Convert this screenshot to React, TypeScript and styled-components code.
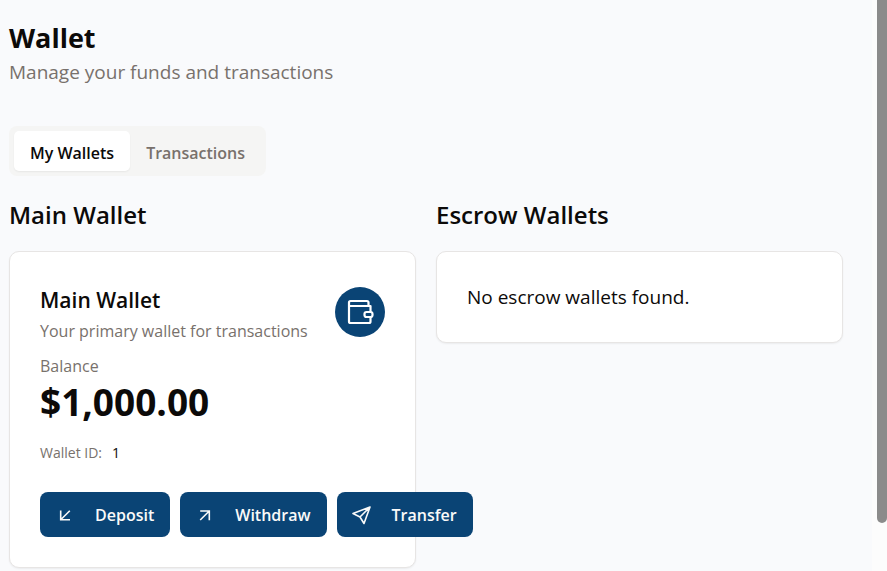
import React, { useState } from "react";
import styled, { createGlobalStyle } from "styled-components";

const GlobalStyle = createGlobalStyle`
  *, *::before, *::after { box-sizing: border-box; }
  body {
    margin: 0;
    background: #f9fafc;
    color: #0c0a09;
    font-family: "Segoe UI", "Open Sans", "Noto Sans", sans-serif;
    overflow: hidden;
  }
  h1, h2, h3, p, dl, dd { margin: 0; }
  button { font: inherit; border: 0; cursor: pointer; }
`;

const Shell = styled.div`
  display: flex;
  align-items: flex-start;
  height: 100vh;
  overflow: hidden;
`;

const Page = styled.main`
  flex: 1;
  min-width: 0;
  padding: 20px 29px 3px 9px;
`;

const ScrollTrack = styled.div`
  width: 15px;
  height: 100%;
  padding-left: 5px;
  background: #fcfcfc;
`;

const ScrollThumb = styled.div`
  height: 523px;
  border-radius: 0 0 5px 5px;
  background: #8b8b8b;
`;

const Title = styled.h1`
  font-size: 27px;
  line-height: 36px;
  font-weight: 700;
`;

const Subtitle = styled.p`
  font-size: 19px;
  line-height: 32px;
  color: #78716c;
`;

const TabList = styled.div`
  display: inline-flex;
  margin: 38px 0 20px;
  padding: 5px;
  border-radius: 8px;
  background: #f5f5f4;
`;

const Tab = styled.button<{ $active: boolean }>`
  padding: 4px 16px 0;
  border-radius: 5px;
  font-size: 16px;
  line-height: 36px;
  font-weight: 600;
  color: ${(p) => (p.$active ? "#0c0a09" : "#78716c")};
  background: ${(p) => (p.$active ? "#ffffff" : "transparent")};
  box-shadow: ${(p) => (p.$active ? "0 1px 2px rgba(0, 0, 0, 0.06)" : "none")};
`;

const Columns = styled.div`
  display: grid;
  grid-template-columns: repeat(2, minmax(0, 1fr));
  align-items: start;
  gap: 20px;
`;

const SectionTitle = styled.h2`
  margin-bottom: 17px;
  font-size: 24px;
  line-height: 38px;
  font-weight: 600;
`;

const Card = styled.div`
  padding: 30px;
  border: 1px solid #e7e5e4;
  border-radius: 10px;
  background: #ffffff;
  box-shadow: 0 1px 2px rgba(0, 0, 0, 0.06);
`;

const CardHeader = styled.div`
  display: flex;
  justify-content: space-between;
  align-items: flex-start;
  padding: 2px 0 5px;
`;

const CardTitle = styled.h3`
  font-size: 21px;
  line-height: 32px;
  font-weight: 600;
`;

const Muted = styled.p`
  font-size: 16px;
  line-height: 30px;
  color: #78716c;
`;

const IconBadge = styled.span`
  display: grid;
  flex: none;
  place-items: center;
  width: 50px;
  height: 50px;
  margin-top: 3px;
  border-radius: 50%;
  background: #0a4475;
  color: #ffffff;
`;

const Balance = styled.p`
  font-size: 37px;
  line-height: 42px;
  font-weight: 700;
`;

const WalletId = styled.dl`
  display: flex;
  gap: 10px;
  margin: 15px 0 24px;
  font-size: 14px;
  line-height: 30px;
  dt { color: #78716c; }
`;

const Actions = styled.div`
  display: flex;
  gap: 10px;
`;

const ActionButton = styled.button`
  display: inline-flex;
  flex: none;
  align-items: center;
  gap: 20px;
  height: 45px;
  padding: 0 16px 0 15px;
  border-radius: 8px;
  background: #0a4475;
  color: #fafaf9;
  font-size: 16px;
  font-weight: 600;
`;

const EmptyText = styled.p`
  font-size: 19px;
  line-height: 30px;
`;

const Icon = ({ size, children }: { size: number; children: React.ReactNode }) => (
  <svg
    width={size}
    height={size}
    viewBox={`0 0 ${size} ${size}`}
    fill="none"
    stroke="currentColor"
    strokeLinejoin="round"
    aria-hidden="true"
  >
    {children}
  </svg>
);

const WalletIcon = () => (
  <Icon size={30}>
    <g strokeWidth="2.2">
      <path d="M4 9V5.5Q4 4 5.5 4H22Q23.5 4 23.5 5.5V9" />
      <path d="M25.5 15V9H4V24.5Q4 26 5.5 26H24Q25.5 26 25.5 24.5V20" />
      <rect x="19.5" y="15" width="8" height="5" rx="2" />
    </g>
  </Icon>
);

const DepositIcon = () => (
  <Icon size={20}>
    <path d="M14.8 5.8L5.7 14.8M5.7 5.5V14.8H15" strokeWidth="1.6" strokeLinejoin="miter" />
  </Icon>
);

const WithdrawIcon = () => (
  <Icon size={20}>
    <path d="M5.2 15L14.3 6M5.2 6H14.3V15.3" strokeWidth="1.6" strokeLinejoin="miter" />
  </Icon>
);

const SendIcon = () => (
  <Icon size={20}>
    <path d="M18 2L1 8.5L8 12L12 18.5ZM18 2L8 12" strokeWidth="1.6" />
  </Icon>
);

const tabs = ["My Wallets", "Transactions"];

const actions = [
  { label: "Deposit", icon: <DepositIcon /> },
  { label: "Withdraw", icon: <WithdrawIcon /> },
  { label: "Transfer", icon: <SendIcon /> },
];

export default function App() {
  const [active, setActive] = useState(tabs[0]);

  return (
    <>
      <GlobalStyle />
      <Shell>
        <Page>
          <Title>Wallet</Title>
          <Subtitle>Manage your funds and transactions</Subtitle>
          <TabList role="tablist">
            {tabs.map((tab) => (
              <Tab
                key={tab}
                type="button"
                role="tab"
                aria-selected={tab === active}
                $active={tab === active}
                onClick={() => setActive(tab)}
              >
                {tab}
              </Tab>
            ))}
          </TabList>
          <Columns>
            <section>
              <SectionTitle>Main Wallet</SectionTitle>
              <Card>
                <CardHeader>
                  <div>
                    <CardTitle>Main Wallet</CardTitle>
                    <Muted>Your primary wallet for transactions</Muted>
                  </div>
                  <IconBadge>
                    <WalletIcon />
                  </IconBadge>
                </CardHeader>
                <Muted>Balance</Muted>
                <Balance>$1,000.00</Balance>
                <WalletId>
                  <dt>Wallet ID:</dt>
                  <dd>1</dd>
                </WalletId>
                <Actions>
                  {actions.map(({ label, icon }) => (
                    <ActionButton key={label} type="button">
                      {icon}
                      {label}
                    </ActionButton>
                  ))}
                </Actions>
              </Card>
            </section>
            <section>
              <SectionTitle>Escrow Wallets</SectionTitle>
              <Card>
                <EmptyText>No escrow wallets found.</EmptyText>
              </Card>
            </section>
          </Columns>
        </Page>
        <ScrollTrack aria-hidden="true">
          <ScrollThumb />
        </ScrollTrack>
      </Shell>
    </>
  );
}
